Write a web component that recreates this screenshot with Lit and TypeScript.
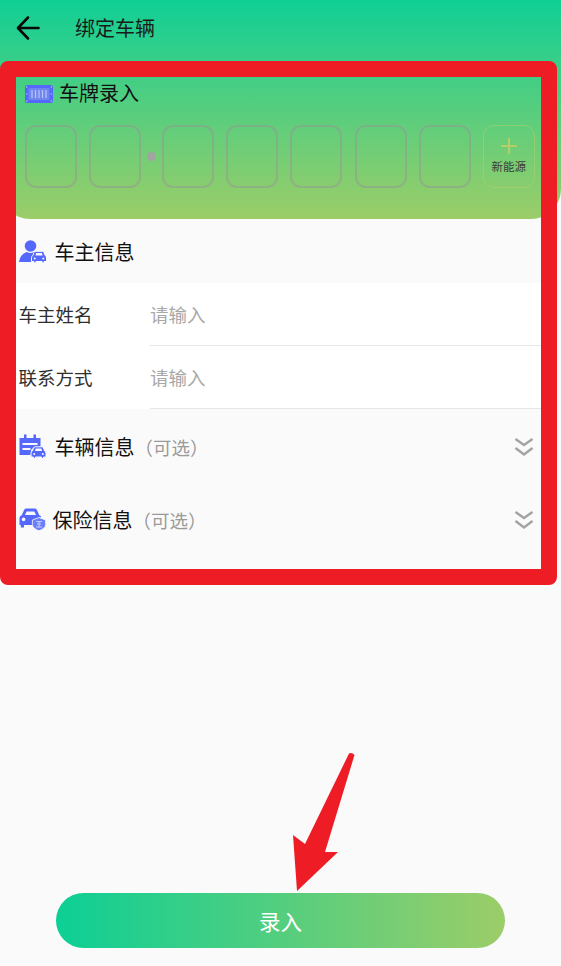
import { LitElement, html, css, svg } from "lit";
import { customElement } from "lit/decorators.js";

const BLUE = "#5468fb";

const plateIcon = html`<svg class="ico-plate" viewBox="0 0 28 18" width="28" height="18">
  <rect x="0" y="0" width="28" height="18" rx="2.5" fill="${BLUE}"/>
  <rect x="3.5" y="3" width="21" height="12" rx="1" fill="#6f86f0"/>
  ${[7, 10.5, 14, 17.5, 21].map((x) => svg`<rect x="${x - 0.6}" y="5" width="1.2" height="8" fill="#b9c6f7"/>`)}
  ${[[1.7, 2], [26.3, 2], [1.7, 16], [26.3, 16], [1.7, 9], [26.3, 9]].map(([x, y]) => svg`<circle cx="${x}" cy="${y}" r="0.8" fill="#a9b8f8"/>`)}
</svg>`;

const miniCar = (x: number, y: number) => svg`
  <g transform="translate(${x} ${y})">
    <path d="M0 10.5 V6.5 Q0 5 1.3 4.6 L2.6 1.4 Q3 0.3 4.2 0.3 H10.8 Q12 0.3 12.4 1.4 L13.7 4.6 Q15 5 15 6.5 V10.5 H12.6 V12 H10.6 V10.5 H4.4 V12 H2.4 V10.5 Z" fill="${BLUE}" stroke="#fafafa" stroke-width="1"/>
    <path d="M3.9 4.4 L4.7 2 H10.3 L11.1 4.4 Z" fill="#fafafa"/>
    <circle cx="3.2" cy="7.4" r="1" fill="#fafafa"/><circle cx="11.8" cy="7.4" r="1" fill="#fafafa"/>
  </g>`;

const personIcon = html`<svg viewBox="0 0 27 23" width="27" height="23">
  <circle cx="11.5" cy="6" r="5.8" fill="${BLUE}"/>
  <path d="M0 22 Q1.5 13.5 8 12 Q11.5 14 15 12 Q16.6 12.7 17.5 13.4 L14 16 L12.5 22 Z" fill="${BLUE}"/>
  ${miniCar(12.5, 11)}
</svg>`;

const calendarIcon = html`<svg viewBox="0 0 27 25" width="27" height="25">
  <path d="M0.5 4 H5 V0.5 H7.5 V4 H14.5 V0.5 H17 V4 H21.5 V13 H15 L12 16 V21 H0.5 Z" fill="${BLUE}"/>
  <rect x="3.5" y="9" width="15" height="2" fill="#fafafa"/>
  <rect x="3.5" y="14" width="8" height="2" fill="#fafafa"/>
  ${miniCar(12, 12.5)}
</svg>`;

const insureIcon = html`<svg viewBox="0 0 27 23" width="27" height="23">
  <path d="M0.5 17 V10 Q0.5 7.8 2.7 7.2 L5.2 1.8 Q5.8 0.5 7.4 0.5 H15.6 Q17.2 0.5 17.8 1.8 L20.3 7.2 Q22 7.6 22.3 9 L17 11 V17 H5 V19.5 H1.8 V17 Z" fill="${BLUE}"/>
  <path d="M6 7 L7.6 3.5 H15.4 L17 7 Z" fill="#fafafa"/>
  <circle cx="4.6" cy="11.4" r="1.8" fill="#fafafa"/>
  <path d="M20 9.5 L26.6 12 V16.5 Q26.6 20.5 20 22.8 Q13.4 20.5 13.4 16.5 V12 Z" fill="#6b7ffb" stroke="#fafafa" stroke-width="0.8"/>
  <path d="M17 13.5 H23 M18 16 H22 M17 19 H23 M20 13 V19.5" stroke="#c9d2fd" stroke-width="0.9" fill="none"/>
</svg>`;

const chevrons = html`<svg class="chev" viewBox="0 0 20 20" width="20" height="20">
  <path d="M1.5 2 L10 8 L18.5 2 M1.5 11 L10 17.5 L18.5 11" fill="none" stroke="#a3a3a3" stroke-width="2.4"/>
</svg>`;

@customElement("app-root")
export class AppRoot extends LitElement {
  static styles = css`
    :host {
      display: block;
      position: relative;
      width: 561px;
      height: 966px;
      overflow: hidden;
      background: #fafafa;
      font-family: "Noto Sans CJK SC", "Noto Sans", sans-serif;
      color: #111;
    }
    .hero {
      height: 219px;
      box-sizing: border-box;
      background: linear-gradient(180deg, #10cf95 0%, #9ccd68 100%);
      border-radius: 0 0 30px 30px;
    }
    .bar {
      height: 56px;
      display: flex;
      align-items: center;
      padding-left: 16px;
      font-size: 20px;
      color: #1a1a1a;
    }
    .bar .title { margin-left: 35px; line-height: 28px; }
    .back { display: block; }
    .plate-head {
      margin-top: 22px;
      height: 30px;
      display: flex;
      align-items: center;
      padding-left: 25px;
      font-size: 20px;
      gap: 6px;
      line-height: 28px;
    }
    .plate-head span { margin-top: -1px; }
    .ico-plate { display: block; margin-top: 1px; }
    .boxes {
      margin-top: 17px;
      padding-left: 25px;
      display: flex;
    }
    .box {
      width: 52px;
      height: 63px;
      box-sizing: border-box;
      border: 2px solid rgba(150, 150, 150, 0.5);
      border-radius: 11px;
    }
    .box + .box { margin-left: 12.14px; }
    .sep {
      width: 21px;
      display: flex;
      align-items: center;
      justify-content: center;
    }
    .sep i {
      display: block;
      width: 9px;
      height: 9px;
      border-radius: 50%;
      background: #a3a3a3;
    }
    .box.new {
      border: 1px solid rgba(180, 205, 110, 0.55);
      display: flex;
      flex-direction: column;
      align-items: center;
      font-size: 11.5px;
      line-height: 16px;
      color: #3c3c3c;
    }
    .plus {
      margin-top: 12px;
      width: 16px;
      height: 16px;
      display: block;
      margin-bottom: 4px;
    }
    .section {
      display: flex;
      align-items: center;
      padding: 0 27px 0 18.5px;
      font-size: 20px;
      color: #111;
    }
    .section svg { display: block; flex: none; }
    .section .name { margin-left: 9px; line-height: 28px; }
    .section .opt { color: #9a9a9a; font-size: 18.5px; margin-left: 0; line-height: 28px; }
    .section .chev { margin-left: auto; }
    .owner { height: 64px; }
    .owner .name { margin-top: 1px; }
    .vehicle { height: 73px; margin-top: 1px; }
    .insure { height: 73px; }
    .insure .name { margin-left: 7px; }
    .form { background: #fff; margin-right: 4px; }
    .row {
      display: flex;
      height: 63px;
      font-size: 18.5px;
      line-height: 26px;
    }
    .row .label {
      width: 150px;
      box-sizing: border-box;
      padding: 0 0 2px 18.5px;
      display: flex;
      align-items: center;
      color: #2e2e2e;
      flex: none;
    }
    .row .value {
      flex: 1;
      display: flex;
      align-items: center;
      color: #a8a8a8;
      border-bottom: 1px solid #e6e6e6;
    }
    .submit {
      margin: 337px 0 0 56px;
      width: 449px;
      height: 55px;
      border-radius: 28px;
      background: linear-gradient(90deg, #0ccf95 0%, #9ccd68 100%);
      color: #fff;
      font-size: 21.5px;
      display: flex;
      align-items: center;
      justify-content: center;
    }
    .frame {
      position: absolute;
      left: 0;
      top: 61px;
      width: 557px;
      height: 524px;
      box-sizing: border-box;
      border: 16px solid #ee1c25;
      border-radius: 8px;
      pointer-events: none;
    }
    .arrow {
      position: absolute;
      left: 285px;
      top: 745px;
      pointer-events: none;
    }
  `;

  render() {
    return html`
      <div class="hero">
        <div class="bar">
          <svg class="back" viewBox="0 0 24 26" width="24" height="26">
            <path d="M12 2.5 L2 13 L12 23.5 M3 13 H22.5" fill="none" stroke="#0a0a0a" stroke-width="2.6" stroke-linecap="round" stroke-linejoin="round"/>
          </svg>
          <span class="title">绑定车辆</span>
        </div>
        <div class="plate-head">${plateIcon}<span>车牌录入</span></div>
        <div class="boxes">
          <div class="box"></div>
          <div class="box"></div>
          <div class="sep"><i></i></div>
          <div class="box"></div>
          <div class="box"></div>
          <div class="box"></div>
          <div class="box"></div>
          <div class="box"></div>
          <div class="box new">
            <svg class="plus" viewBox="0 0 16 16"><path d="M8 0 V16 M0 8 H16" stroke="#b4cf66" stroke-width="2"/></svg>
            <span>新能源</span>
          </div>
        </div>
      </div>
      <div class="section owner">${personIcon}<span class="name">车主信息</span></div>
      <div class="form">
        <div class="row"><div class="label">车主姓名</div><div class="value">请输入</div></div>
        <div class="row"><div class="label">联系方式</div><div class="value">请输入</div></div>
      </div>
      <div class="section vehicle">${calendarIcon}<span class="name">车辆信息</span><span class="opt">（可选）</span>${chevrons}</div>
      <div class="section insure">${insureIcon}<span class="name">保险信息</span><span class="opt">（可选）</span>${chevrons}</div>
      <div class="submit">录入</div>
      <div class="frame"></div>
      <svg class="arrow" viewBox="0 0 80 150" width="80" height="150">
        <path d="M64 8.5 Q67 7 69.5 10 L40 107 L53 107 L12 146 L8 90 L20 99 Z" fill="#ee1c25"/>
      </svg>
    `;
  }
}
